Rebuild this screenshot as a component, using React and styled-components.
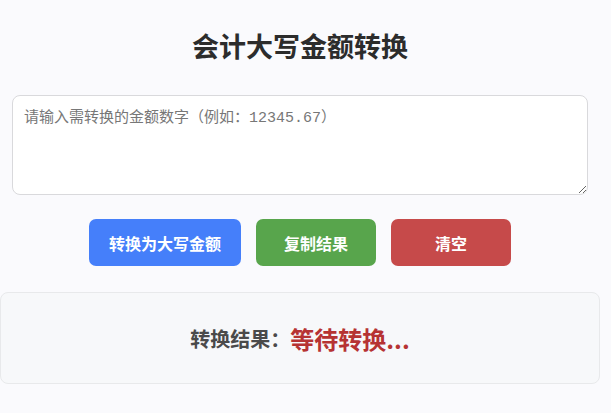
import React, { useState } from "react";
import styled, { createGlobalStyle } from "styled-components";

const GlobalStyle = createGlobalStyle`
  body {
    margin: 0;
    background-color: #fafafd;
    font-family: "Noto Sans CJK SC", "Noto Sans", sans-serif;
  }
`;

const Container = styled.div`
  width: 600px;
  padding-top: 22px;
`;

const Title = styled.h1`
  margin: 0 0 25px;
  text-align: center;
  font-size: 27px;
  line-height: 48px;
  font-weight: 700;
  color: #2c2c2c;
`;

const Input = styled.textarea`
  display: block;
  box-sizing: border-box;
  width: 576px;
  height: 100px;
  margin: 0 auto;
  padding: 13px 11px;
  border: 1px solid #d9d9dc;
  border-radius: 8px;
  background: #fff;
  font-family: "Liberation Mono", "Noto Sans CJK SC", monospace;
  font-size: 15px;
  line-height: 20px;
  color: #333;
  outline: none;

  &::placeholder {
    color: #777;
  }
`;

const Actions = styled.div`
  display: flex;
  justify-content: center;
  gap: 15px;
  margin: 24px 0 26px;
`;

const Button = styled.button`
  width: ${(props) => props.width}px;
  height: 47px;
  border: none;
  border-radius: 7px;
  background-color: ${(props) => props.color};
  color: #fff;
  font-family: "Noto Sans CJK SC", sans-serif;
  font-size: 16px;
  font-weight: 700;
  cursor: pointer;
`;

const ResultBox = styled.div`
  box-sizing: border-box;
  height: 92px;
  display: flex;
  align-items: center;
  justify-content: center;
  border: 1px solid #e8e9eb;
  border-radius: 8px;
  background-color: #f7f8fa;
`;

const Label = styled.span`
  font-size: 20px;
  font-weight: 700;
  color: #4a4a4a;
`;

const Value = styled.span`
  font-size: 24px;
  font-weight: 700;
  color: #b63333;
`;

const App = () => {
  const [text, setText] = useState("");
  const [result, setResult] = useState("等待转换...");

  return (
    <Container>
      <GlobalStyle />
      <Title>会计大写金额转换</Title>
      <Input
        value={text}
        onChange={(e) => setText(e.target.value)}
        placeholder="请输入需转换的金额数字（例如：12345.67）"
      />
      <Actions>
        <Button width={152} color="#457ffa">转换为大写金额</Button>
        <Button width={120} color="#58a54c">复制结果</Button>
        <Button
          width={120}
          color="#c64a4a"
          onClick={() => {
            setText("");
            setResult("等待转换...");
          }}
        >
          清空
        </Button>
      </Actions>
      <ResultBox>
        <Label>转换结果：</Label>
        <Value>{result}</Value>
      </ResultBox>
    </Container>
  );
};

export default App;
